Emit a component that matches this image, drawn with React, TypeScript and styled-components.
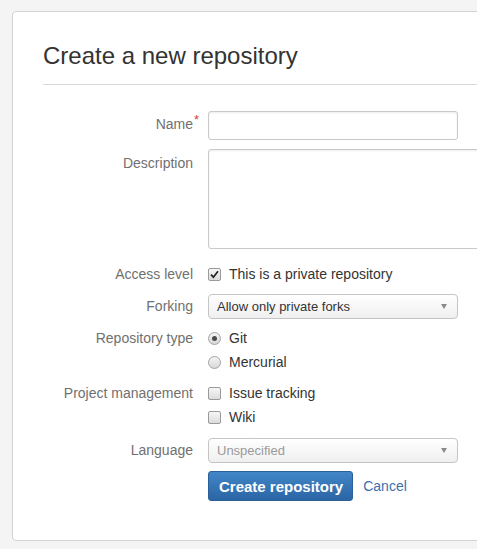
import React from "react"
import styled, { createGlobalStyle } from "styled-components"

const GlobalStyle = createGlobalStyle`
  html,
  body {
    margin: 0;
    padding: 0;
    background: #f4f4f4;
    font-family: "Liberation Sans", Arial, sans-serif;
    overflow: hidden;
  }
`

const Page = styled.div`
  width: 477px;
  height: 549px;
  overflow: hidden;
  padding: 11px 0 0 12px;
  box-sizing: border-box;
`

const Panel = styled.div`
  width: 620px;
  height: 530px;
  box-sizing: border-box;
  background: #fff;
  border: 1px solid #d2d2d2;
  border-radius: 4px;
  padding: 30px 0 0 30px;
`

const Title = styled.h1`
  margin: 0;
  font-size: 24px;
  line-height: 28px;
  font-weight: normal;
  color: #333;
`

const Divider = styled.hr`
  margin: 14px 0 0;
  border: 0;
  border-top: 1px solid #d9d9d9;
  height: 0;
`

const Form = styled.form`
  display: flex;
  flex-direction: column;
  padding-top: 26px;
`

const Row = styled.div<{ $gap?: number }>`
  display: flex;
  align-items: flex-start;
  margin-top: ${(p) => p.$gap ?? 0}px;
`

const Label = styled.label<{ $pad?: number }>`
  position: relative;
  width: 150px;
  flex-shrink: 0;
  margin-right: 15px;
  padding-top: ${(p) => p.$pad ?? 0}px;
  text-align: right;
  font-size: 14px;
  line-height: 20px;
  color: #707070;
`

const Required = styled.span`
  position: absolute;
  right: -6px;
  top: -1px;
  color: #d04437;
  font-size: 13px;
`

const TextInput = styled.input`
  width: 250px;
  height: 29px;
  box-sizing: border-box;
  border: 1px solid #c9c9c9;
  border-radius: 3px;
  box-shadow: inset 0 1px 2px rgba(0, 0, 0, 0.08);
  font: inherit;
  padding: 0 8px;
`

const TextArea = styled.textarea`
  width: 320px;
  height: 100px;
  box-sizing: border-box;
  border: 1px solid #c9c9c9;
  border-radius: 3px;
  box-shadow: inset 0 1px 2px rgba(0, 0, 0, 0.08);
  resize: none;
  font: inherit;
`

const Option = styled.span`
  display: flex;
  align-items: center;
  gap: 8px;
  font-size: 14px;
  line-height: 20px;
  color: #333;
`

const CheckBox = styled.span`
  width: 11px;
  height: 11px;
  border: 1px solid #9a9a9a;
  border-radius: 2px;
  background: linear-gradient(#f6f6f6, #dcdcdc);
  display: flex;
  align-items: center;
  justify-content: center;
`

const RadioDot = styled.span<{ $on?: boolean }>`
  width: 11px;
  height: 11px;
  border: 1px solid #a3a3a3;
  border-radius: 50%;
  background: linear-gradient(#f4f4f4, #d8d8d8);
  display: flex;
  align-items: center;
  justify-content: center;

  &::after {
    content: "";
    width: 5px;
    height: 5px;
    border-radius: 50%;
    background: ${(p) => (p.$on ? "#4a4a4a" : "transparent")};
  }
`

const SelectBox = styled.div<{ $muted?: boolean }>`
  width: 250px;
  height: 25px;
  box-sizing: border-box;
  display: flex;
  align-items: center;
  justify-content: space-between;
  padding: 0 10px 0 8px;
  border: 1px solid #c4c4c4;
  border-radius: 4px;
  background: linear-gradient(#ffffff, #efefef);
  font-size: 13px;
  color: ${(p) => (p.$muted ? "#9a9a9a" : "#333")};
`

const SelectArrow = styled.span`
  width: 0;
  height: 0;
  border-left: 3px solid transparent;
  border-right: 3px solid transparent;
  border-top: 5px solid #8a8a8a;
`

const Actions = styled.div`
  display: flex;
  align-items: center;
  gap: 10px;
  margin: 8px 0 0 165px;
`

const PrimaryButton = styled.button`
  height: 30px;
  box-sizing: border-box;
  padding: 0 9px 0 10px;
  border: 1px solid #2b5f98;
  border-radius: 3px;
  background: linear-gradient(#4186c7, #2b65a5);
  color: #fff;
  font-family: inherit;
  font-size: 15px;
  font-weight: bold;
  cursor: pointer;
`

const CancelLink = styled.a`
  font-size: 14px;
  color: #3b6fae;
  text-decoration: none;
`

const Check = () => (
  <svg width="9" height="9" viewBox="0 0 9 9">
    <path d="M1 4.6 L3.4 7.2 L8 1.2" fill="none" stroke="#222" strokeWidth="1.7" />
  </svg>
)

export default function App() {
  return (
    <>
      <GlobalStyle />
      <Page>
        <Panel>
          <Title>Create a new repository</Title>
          <Divider />
          <Form onSubmit={(e) => e.preventDefault()}>
            <Row>
              <Label $pad={3}>
                Name<Required>*</Required>
              </Label>
              <TextInput />
            </Row>
            <Row $gap={9}>
              <Label $pad={4}>Description</Label>
              <TextArea />
            </Row>
            <Row $gap={15}>
              <Label>Access level</Label>
              <Option>
                <CheckBox>
                  <Check />
                </CheckBox>
                This is a private repository
              </Option>
            </Row>
            <Row $gap={10}>
              <Label $pad={2}>Forking</Label>
              <SelectBox>
                Allow only private forks
                <SelectArrow />
              </SelectBox>
            </Row>
            <Row $gap={9}>
              <Label>Repository type</Label>
              <Option>
                <RadioDot $on />
                Git
              </Option>
            </Row>
            <Row $gap={4}>
              <Label />
              <Option>
                <RadioDot />
                Mercurial
              </Option>
            </Row>
            <Row $gap={11}>
              <Label>Project management</Label>
              <Option>
                <CheckBox />
                Issue tracking
              </Option>
            </Row>
            <Row $gap={4}>
              <Label />
              <Option>
                <CheckBox />
                Wiki
              </Option>
            </Row>
            <Row $gap={11}>
              <Label $pad={2}>Language</Label>
              <SelectBox $muted>
                Unspecified
                <SelectArrow />
              </SelectBox>
            </Row>
            <Actions>
              <PrimaryButton type="submit">Create repository</PrimaryButton>
              <CancelLink href="#">Cancel</CancelLink>
            </Actions>
          </Form>
        </Panel>
      </Page>
    </>
  )
}
